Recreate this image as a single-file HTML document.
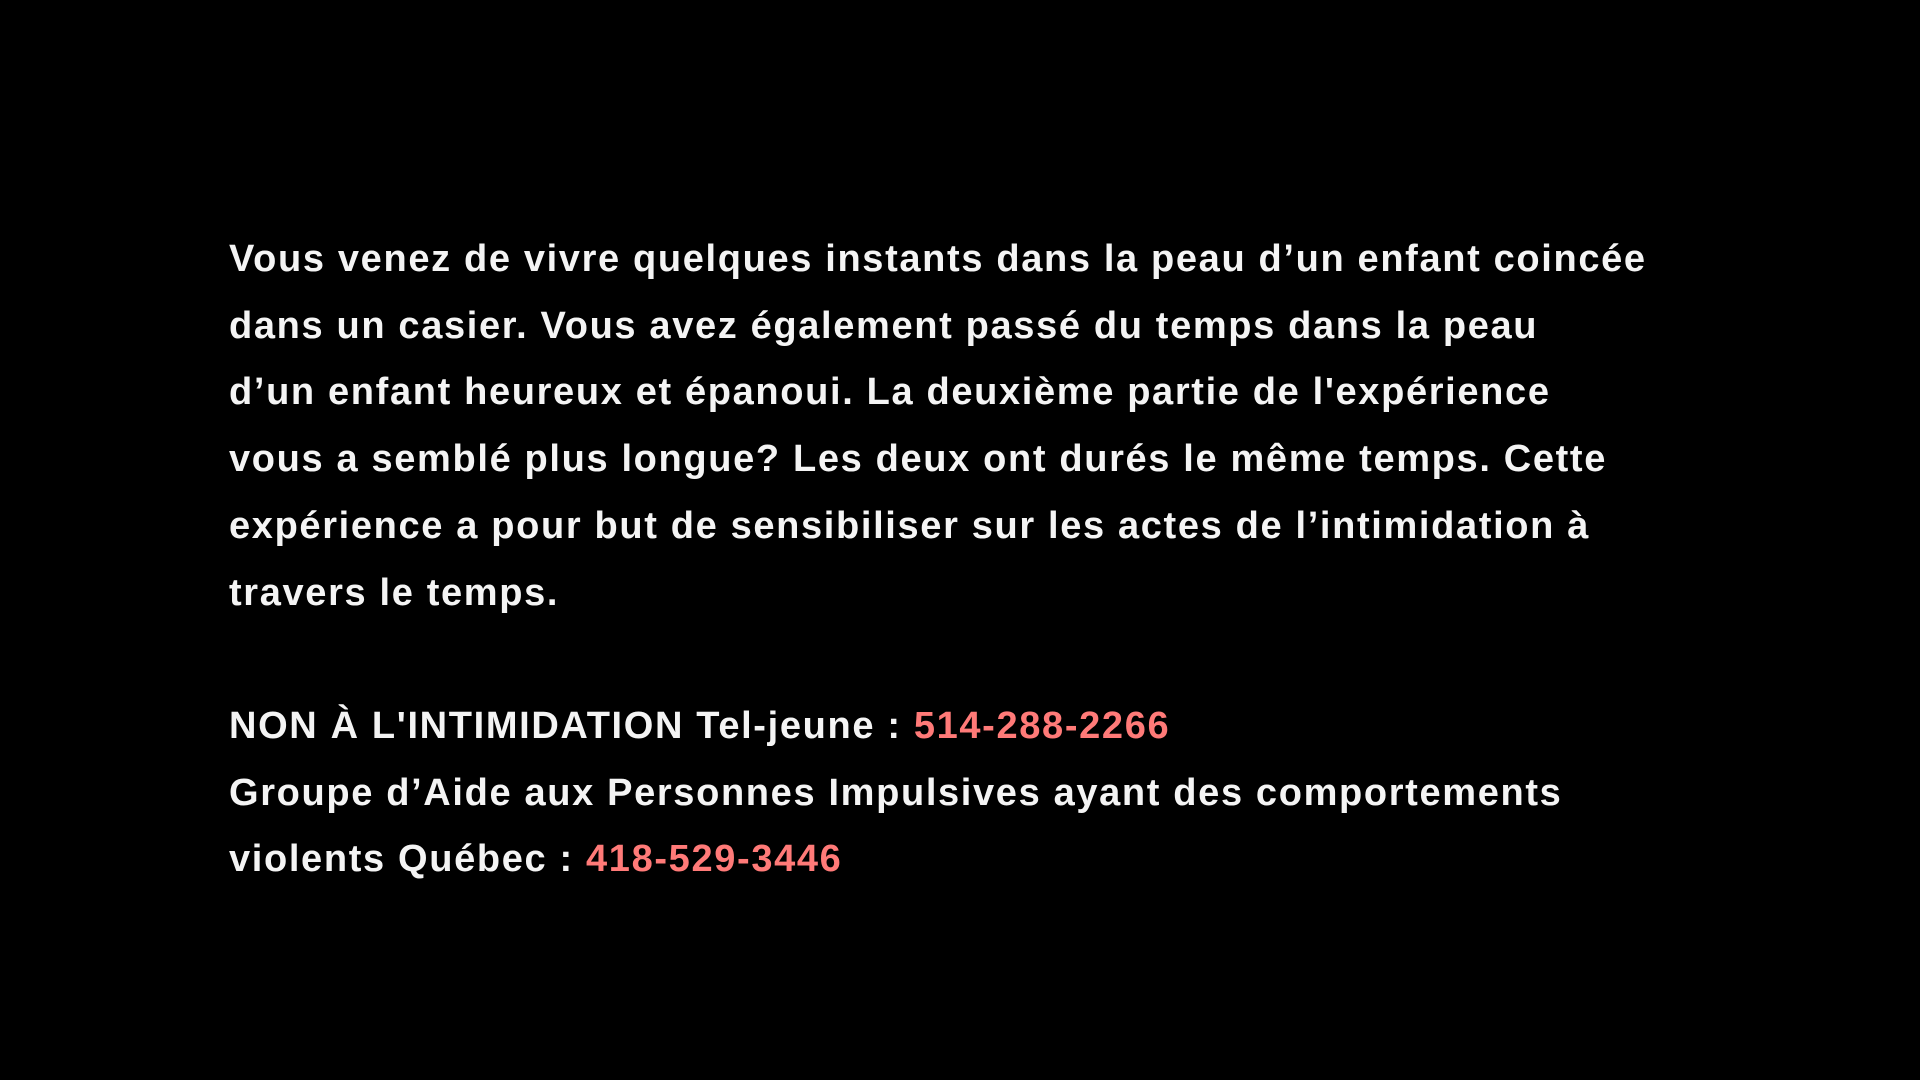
<!DOCTYPE html>
<html><head><meta charset="utf-8"><style>
html,body{margin:0;padding:0;background:#000;width:1920px;height:1080px;overflow:hidden}
.t{position:absolute;left:229px;top:226px;font-family:"Liberation Sans",sans-serif;font-weight:bold;font-size:38px;line-height:66.7px;color:#f4f4f4;white-space:nowrap;letter-spacing:1.65px}
.p{color:#ff7a78}
</style></head><body>
<div class="t">Vous venez de vivre quelques instants dans la peau d’un enfant coincée<br>dans un casier. Vous avez également passé du temps dans la peau<br>d’un enfant heureux et épanoui. La deuxième partie de l'expérience<br>vous a semblé plus longue? Les deux ont durés le même temps. Cette<br>expérience a pour but de sensibiliser sur les actes de l’intimidation à<br>travers le temps.<br><br>NON À L'INTIMIDATION Tel-jeune : <span class="p">514-288-2266</span><br>Groupe d’Aide aux Personnes Impulsives ayant des comportements<br>violents Québec : <span class="p">418-529-3446</span></div>
</body></html>
